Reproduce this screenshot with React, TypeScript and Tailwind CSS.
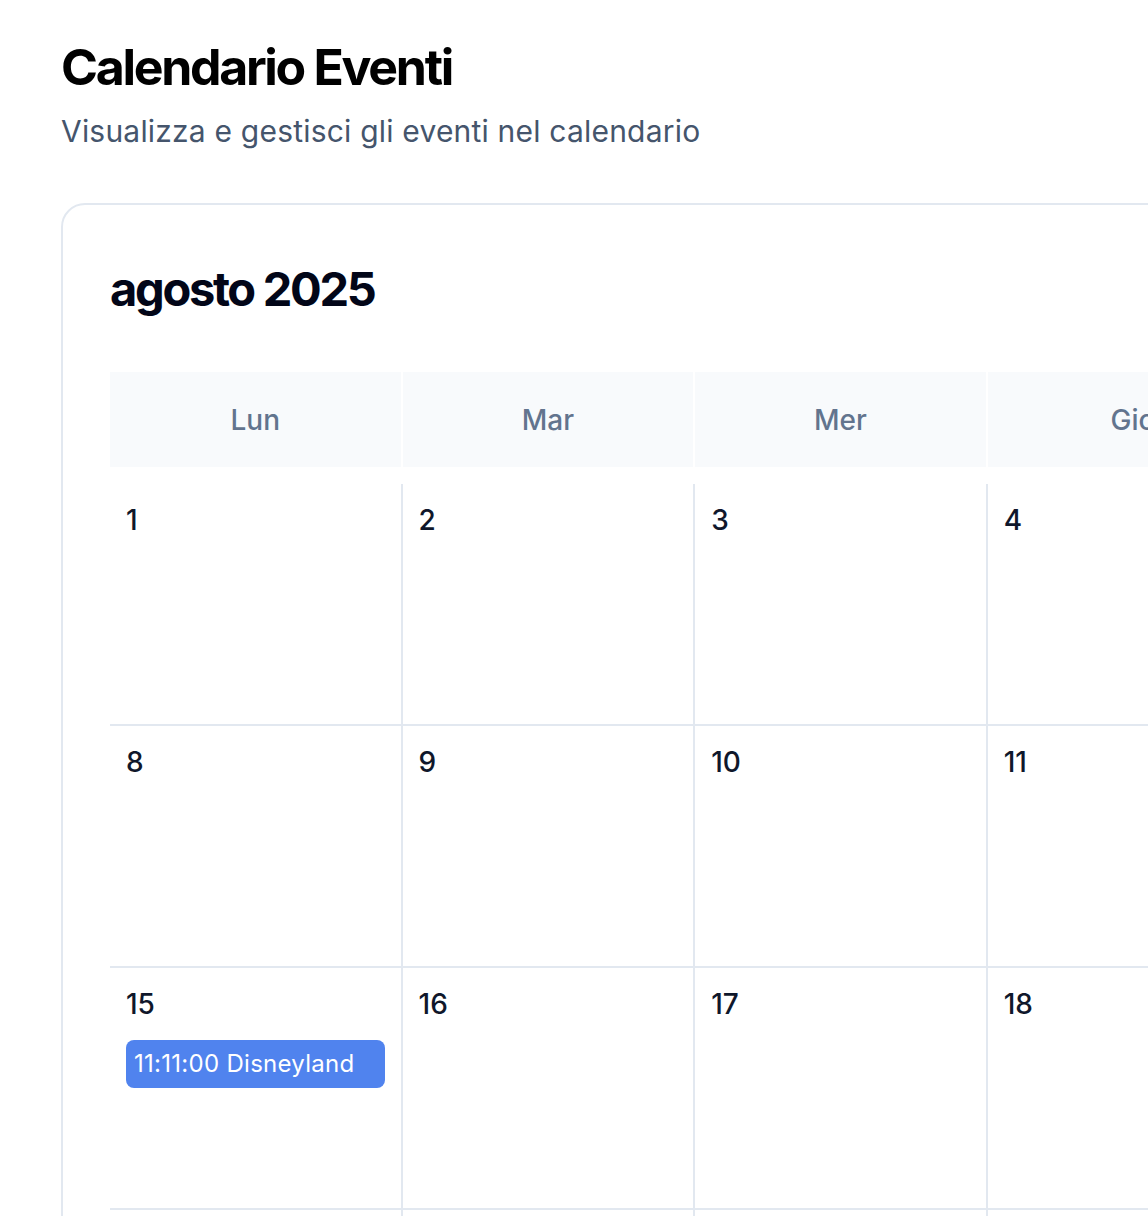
const weekdays = ['Lun', 'Mar', 'Mer', 'Gio', 'Ven', 'Sab', 'Dom'];

type CalendarEvent = { day: number; time: string; title: string };

const events: CalendarEvent[] = [{ day: 15, time: '11:11:00', title: 'Disneyland' }];

const days = Array.from({ length: 35 }, (_, i) => (i < 31 ? i + 1 : null));

function DayCell({ day }: { day: number | null }) {
  const dayEvents = events.filter((e) => e.day === day);
  return (
    <div className="h-[240px] bg-white p-4">
      {day && <div className="text-[28px] font-medium leading-[40px] text-slate-900">{day}</div>}
      {dayEvents.map((e) => (
        <div
          key={e.title}
          className="mt-4 truncate rounded-lg bg-[#5083ee] px-2 py-2 text-[24px] leading-[32px] tracking-[0.28px] text-white"
        >
          {e.time} {e.title}
        </div>
      ))}
    </div>
  );
}

export default function App() {
  return (
    <div className="h-[1216px] w-[1148px] overflow-hidden bg-white font-['Inter',sans-serif]">
      <div className="w-[2280px] pl-[61px] pt-[37px]">
        <h1 className="text-[50px] font-bold leading-[60px] tracking-[-0.046em] text-black">
          Calendario Eventi
        </h1>
        <p className="mt-[14px] text-[30px] leading-[40px] tracking-[0.2px] text-slate-600">
          Visualizza e gestisci gli eventi nel calendario
        </p>

        <div className="mt-[52px] w-[2144px] rounded-3xl border-2 border-slate-200 px-[47px] pt-[56px]">
          <h2 className="mb-[55px] text-[47px] font-bold leading-[56px] tracking-[-0.049em] text-slate-950">
            agosto 2025
          </h2>

          <div className="mb-[17px] grid w-[2046px] grid-cols-7 gap-[2px]">
            {weekdays.map((d) => (
              <div
                key={d}
                className="flex h-[95px] items-center justify-center bg-slate-50 text-[28px] font-medium text-slate-500"
              >
                {d}
              </div>
            ))}
          </div>

          <div className="grid w-[2046px] grid-cols-7 gap-[2px] bg-slate-200">
            {days.map((d, i) => (
              <DayCell key={i} day={d} />
            ))}
          </div>
        </div>
      </div>
    </div>
  );
}
